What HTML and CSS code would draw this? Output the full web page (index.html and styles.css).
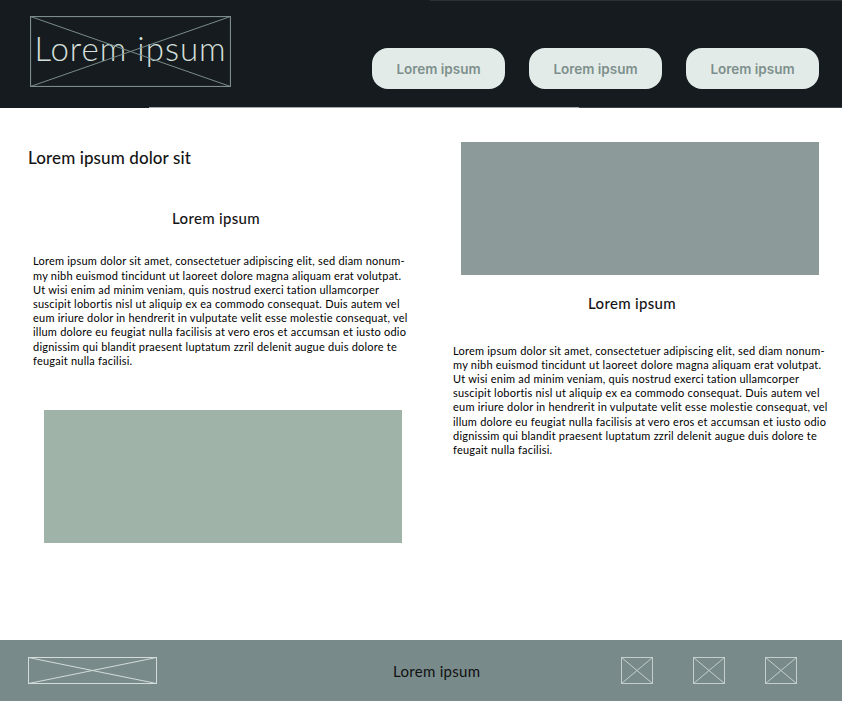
FILE: index.html
```html
<!DOCTYPE html>
<html lang="en">
<head>
<meta charset="utf-8">
<title>Wireframe</title>
<link rel="stylesheet" href="styles.css">
</head>
<body>
<div class="page">
  <header class="header">
    <div class="logo">
      <svg class="xbox" viewBox="0 0 201 71" preserveAspectRatio="none" aria-hidden="true">
        <rect x="0.5" y="0.5" width="200" height="70" fill="none" stroke="#7b8c8a" stroke-width="1.2"/>
        <line x1="0.5" y1="0.5" x2="200.5" y2="70.5" stroke="#7b8c8a" stroke-width="1"/>
        <line x1="200.5" y1="0.5" x2="0.5" y2="70.5" stroke="#7b8c8a" stroke-width="1"/>
      </svg>
      <span class="logo-text">Lorem ipsum</span>
    </div>
    <nav class="nav">
      <a class="btn">Lorem ipsum</a>
      <a class="btn">Lorem ipsum</a>
      <a class="btn">Lorem ipsum</a>
    </nav>
  </header>
  <div class="header-rule"></div>

  <main class="main">
    <section class="col col-left">
      <h1 class="title">Lorem ipsum dolor sit</h1>
      <h2 class="subhead subhead-left">Lorem ipsum</h2>
      <p class="text">Lorem ipsum dolor sit amet, consectetuer adipiscing elit, sed diam nonum-<br>my nibh euismod tincidunt ut laoreet dolore magna aliquam erat volutpat.<br>Ut wisi enim ad minim veniam, quis nostrud exerci tation ullamcorper<br>suscipit lobortis nisl ut aliquip ex ea commodo consequat. Duis autem vel<br>eum iriure dolor in hendrerit in vulputate velit esse molestie consequat, vel<br>illum dolore eu feugiat nulla facilisis at vero eros et accumsan et iusto odio<br>dignissim qui blandit praesent luptatum zzril delenit augue duis dolore te<br>feugait nulla facilisi.</p>
      <div class="img img-green"></div>
    </section>
    <section class="col col-right">
      <div class="img img-gray"></div>
      <h2 class="subhead subhead-right">Lorem ipsum</h2>
      <p class="text">Lorem ipsum dolor sit amet, consectetuer adipiscing elit, sed diam nonum-<br>my nibh euismod tincidunt ut laoreet dolore magna aliquam erat volutpat.<br>Ut wisi enim ad minim veniam, quis nostrud exerci tation ullamcorper<br>suscipit lobortis nisl ut aliquip ex ea commodo consequat. Duis autem vel<br>eum iriure dolor in hendrerit in vulputate velit esse molestie consequat, vel<br>illum dolore eu feugiat nulla facilisis at vero eros et accumsan et iusto odio<br>dignissim qui blandit praesent luptatum zzril delenit augue duis dolore te<br>feugait nulla facilisi.</p>
    </section>
  </main>

  <footer class="footer">
    <svg class="flogo" viewBox="0 0 129 27" preserveAspectRatio="none" aria-hidden="true">
      <rect x="0.5" y="0.5" width="128" height="26" fill="none" stroke="#d3dcda" stroke-width="1"/>
      <line x1="0.5" y1="0.5" x2="128.5" y2="26.5" stroke="#d3dcda" stroke-width="1"/>
      <line x1="128.5" y1="0.5" x2="0.5" y2="26.5" stroke="#d3dcda" stroke-width="1"/>
    </svg>
    <span class="ftext">Lorem ipsum</span>
    <div class="ficons">
      <svg class="ficon" viewBox="0 0 32 27" aria-hidden="true"><rect x="0.5" y="0.5" width="31" height="26" fill="none" stroke="#c3cecc"/><line x1="0.5" y1="0.5" x2="31.5" y2="26.5" stroke="#c3cecc"/><line x1="31.5" y1="0.5" x2="0.5" y2="26.5" stroke="#c3cecc"/></svg>
      <svg class="ficon" viewBox="0 0 32 27" aria-hidden="true"><rect x="0.5" y="0.5" width="31" height="26" fill="none" stroke="#c3cecc"/><line x1="0.5" y1="0.5" x2="31.5" y2="26.5" stroke="#c3cecc"/><line x1="31.5" y1="0.5" x2="0.5" y2="26.5" stroke="#c3cecc"/></svg>
      <svg class="ficon" viewBox="0 0 32 27" aria-hidden="true"><rect x="0.5" y="0.5" width="31" height="26" fill="none" stroke="#c3cecc"/><line x1="0.5" y1="0.5" x2="31.5" y2="26.5" stroke="#c3cecc"/><line x1="31.5" y1="0.5" x2="0.5" y2="26.5" stroke="#c3cecc"/></svg>
    </div>
  </footer>
</div>
</body>
</html>
```

FILE: styles.css
```css
* { box-sizing: border-box; }
html, body { margin: 0; padding: 0; background: #ffffff; }
body {
  font-family: Lato, "Open Sans", sans-serif;
  color: #141414;
  font-variant-ligatures: none;
}

.page {
  width: 842px;
  height: 702px;
  display: flex;
  flex-direction: column;
}

/* Header */
.header {
  height: 107px;
  display: flex;
  align-items: flex-start;
  padding: 16px 23px 0 30px;
  background:
    linear-gradient(to right, transparent 430px, #2c3336 430px) top left / 100% 1px no-repeat,
    #151b1e;
}
.header-rule {
  height: 1px;
  background: linear-gradient(to right, #151b1e 149px, #a3acad 149px, #a3acad 579px, #3b4446 579px);
}
.logo {
  position: relative;
  width: 201px;
  height: 71px;
  display: flex;
  align-items: center;
  justify-content: center;
  padding-bottom: 8px;
}
.xbox {
  position: absolute;
  inset: 0;
  width: 100%;
  height: 100%;
}
.logo-text {
  font-family: Lato, sans-serif;
  font-weight: 300;
  font-size: 33px;
  letter-spacing: 1px;
  line-height: 38px;
  color: #d6e0dd;
  white-space: nowrap;
}
.nav {
  margin-left: auto;
  margin-top: 32px;
  display: flex;
  gap: 24px;
}
.btn {
  width: 133px;
  height: 41px;
  border-radius: 16px;
  background: #e3ebe8;
  display: flex;
  align-items: center;
  justify-content: center;
  font-family: Inter, Roboto, sans-serif;
  font-weight: 600;
  font-size: 13.5px;
  color: #7d8f8c;
}

/* Main */
.main {
  flex: 1;
  display: grid;
  grid-template-columns: 421px 421px;
}
.col { display: flex; flex-direction: column; }
.col-left { padding-left: 33px; }
.col-right { padding-left: 32px; }

.title {
  margin: 40px 0 0 -5px;
  font-size: 17px;
  line-height: 20.4px;
  font-weight: 500;
  letter-spacing: 0.1px;
  color: #141414;
}
.subhead {
  margin: 0;
  font-size: 15px;
  line-height: 17.4px;
  font-weight: 500;
  letter-spacing: 0.3px;
  text-align: center;
  color: #141414;
}
.subhead-left { margin-top: 41.4px; width: 366px; }
.subhead-right { margin-top: 20px; width: 358px; }

.text {
  margin: 27.2px 0 0;
  font-size: 11px;
  letter-spacing: 0.22px;
  line-height: 14.2px;
  white-space: nowrap;
  color: #000;
}
.col-right .text { margin-top: 31.2px; }

.img { width: 358px; height: 133px; }
.img-green { background: #9fb3a8; margin: 41.8px 0 0 11px; }
.img-gray { background: #8c9a9a; margin: 34px 0 0 8px; }

/* Footer */
.footer {
  height: 61px;
  margin-bottom: 1px;
  background: #788a8a;
  display: flex;
  align-items: center;
  padding: 0 45px 0 28px;
}
.flogo { width: 129px; height: 27px; display: block; }
.ftext {
  margin-left: 236px;
  font-size: 15px;
  letter-spacing: 0.3px;
  color: #111;
}
.ficons { margin-left: auto; display: flex; gap: 40px; }
.ficon { width: 32px; height: 27px; display: block; }
```
